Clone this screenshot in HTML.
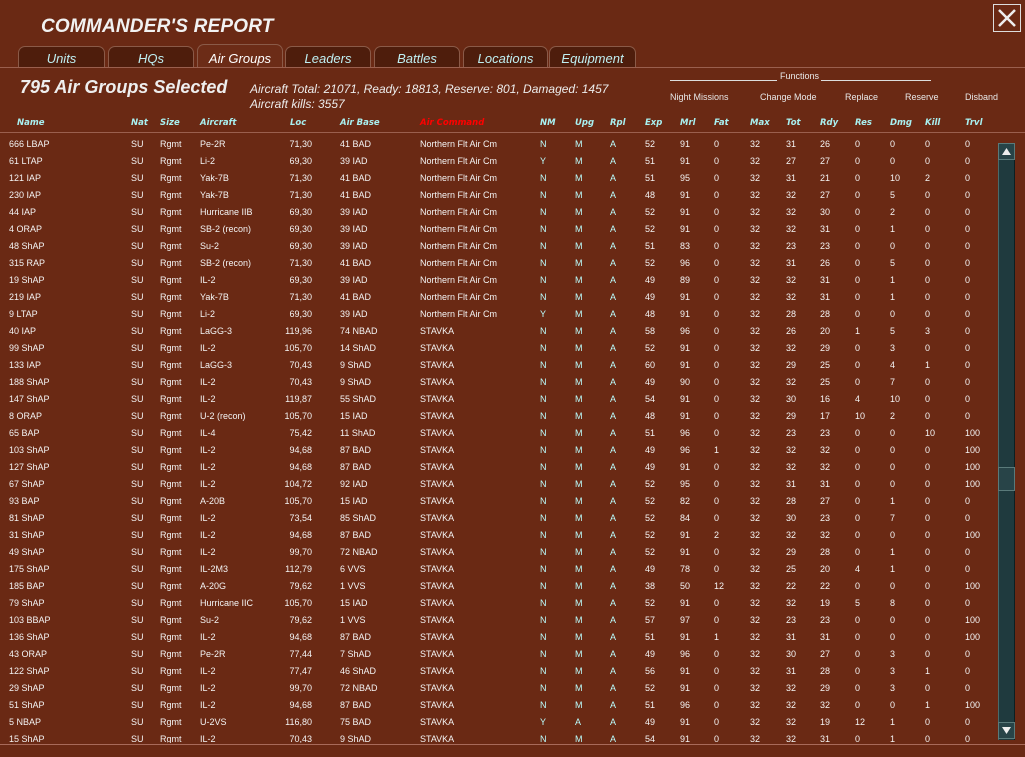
<!DOCTYPE html>
<html><head><meta charset="utf-8"><style>
*{margin:0;padding:0;box-sizing:border-box}
body{width:1025px;height:757px;background:#6a2914;position:relative;overflow:hidden;font-family:"Liberation Sans",sans-serif;color:#fff}
.abs{position:absolute;white-space:nowrap}
.title{left:41px;top:16px;font-size:19px;font-style:italic;color:#f2f2f2;font-weight:bold;letter-spacing:0.2px}
.close{left:993px;top:4px;width:28px;height:28px;border:1px solid #ddd}
.tab{position:absolute;top:46px;height:22px;background:#4e1d0c;border:1px solid #8a5a48;border-bottom:none;border-radius:7px 7px 0 0;color:#bfeff2;font-style:italic;font-size:13px;text-align:center;line-height:24px}
.tab.act{top:44px;height:24px;background:#6c2c17;color:#fff;line-height:28px}
.hline{position:absolute;left:0;width:1025px;height:1px;background:#9a5f4e}
.sel{left:20px;top:77px;font-size:18px;font-weight:bold;font-style:italic;color:#eee}
.stat{left:250px;font-size:12px;font-style:italic;color:#ececec}
.fn{font-size:9px;color:#e8e8e8;top:92px}
.hd span{position:absolute;top:118px;font-family:"DejaVu Sans",sans-serif;font-size:8.5px;font-weight:bold;font-style:italic;color:#a8f0f0}
#tbl{position:absolute;left:0;top:137px;width:995px;height:606px;overflow:hidden}
#in{position:absolute;left:0;top:-1px}
.r{position:relative;height:17px;width:995px;font-size:9px;line-height:17px;color:#f4f4f4}
.r span{position:absolute;top:0}
.r span:nth-child(1){left:9px}
.r span:nth-child(2){left:131px}
.r span:nth-child(3){left:160px}
.r span:nth-child(4){left:200px}
.r span:nth-child(5){left:270px;width:42px;text-align:right}
.r span:nth-child(6){left:340px}
.r span:nth-child(7){left:420px}
.r span:nth-child(8){left:540px;color:#bff}
.r span:nth-child(9){left:575px;color:#bff}
.r span:nth-child(10){left:610px;color:#bff}
.r span:nth-child(11){left:645px}
.r span:nth-child(12){left:680px}
.r span:nth-child(13){left:714px}
.r span:nth-child(14){left:750px}
.r span:nth-child(15){left:786px}
.r span:nth-child(16){left:820px}
.r span:nth-child(17){left:855px}
.r span:nth-child(18){left:890px}
.r span:nth-child(19){left:925px}
.r span:nth-child(20){left:965px}
.sb{position:absolute;left:998px;top:143px;width:17px;height:597px;background:#1f3a3e;border-left:1px solid #4a6a6a;border-right:1px solid #0d1f22}
.btn{position:absolute;left:998px;width:17px;height:17px;background:#284448;border:1px solid #5a7a7a}
</style></head><body>
<div class="abs title">COMMANDER'S REPORT</div>
<div class="abs close"><svg width="26" height="26" viewBox="0 0 26 26"><path d="M5 5L21 21M21 5L5 21" stroke="#eee" stroke-width="2.5"/></svg></div>
<div class="tab" style="left:18px;width:87px">Units</div>
<div class="tab" style="left:108px;width:86px">HQs</div>
<div class="tab act" style="left:197px;width:86px">Air Groups</div>
<div class="tab" style="left:285px;width:86px">Leaders</div>
<div class="tab" style="left:374px;width:86px">Battles</div>
<div class="tab" style="left:463px;width:85px">Locations</div>
<div class="tab" style="left:549px;width:87px">Equipment</div>
<div class="hline" style="top:67px"></div>
<div class="abs sel">795 Air Groups Selected</div>
<div class="abs stat" style="top:82px">Aircraft Total: 21071, Ready: 18813, Reserve: 801, Damaged: 1457</div>
<div class="abs stat" style="top:97px">Aircraft kills: 3557</div>
<div class="abs" style="left:670px;top:80px;width:107px;height:1px;background:#ddd"></div>
<div class="abs fn" style="left:780px;top:71px">Functions</div>
<div class="abs" style="left:821px;top:80px;width:110px;height:1px;background:#ddd"></div>
<div class="abs fn" style="left:670px">Night Missions</div>
<div class="abs fn" style="left:760px">Change Mode</div>
<div class="abs fn" style="left:845px">Replace</div>
<div class="abs fn" style="left:905px">Reserve</div>
<div class="abs fn" style="left:965px">Disband</div>
<div class="hd">
<span style="left:17px">Name</span><span style="left:131px">Nat</span><span style="left:160px">Size</span><span style="left:200px">Aircraft</span><span style="left:290px">Loc</span><span style="left:340px">Air Base</span><span style="left:420px;color:#f00">Air Command</span><span style="left:540px">NM</span><span style="left:575px">Upg</span><span style="left:610px">Rpl</span><span style="left:645px">Exp</span><span style="left:680px">Mrl</span><span style="left:714px">Fat</span><span style="left:750px">Max</span><span style="left:786px">Tot</span><span style="left:820px">Rdy</span><span style="left:855px">Res</span><span style="left:890px">Dmg</span><span style="left:925px">Kill</span><span style="left:965px">Trvl</span>
</div>
<div class="hline" style="top:132px"></div>
<div id="tbl"><div id="in">
<div class="r"><span>666 LBAP</span><span>SU</span><span>Rgmt</span><span>Pe-2R</span><span>71,30</span><span>41 BAD</span><span>Northern Flt Air Cm</span><span>N</span><span>M</span><span>A</span><span>52</span><span>91</span><span>0</span><span>32</span><span>31</span><span>26</span><span>0</span><span>0</span><span>0</span><span>0</span></div>
<div class="r"><span>61 LTAP</span><span>SU</span><span>Rgmt</span><span>Li-2</span><span>69,30</span><span>39 IAD</span><span>Northern Flt Air Cm</span><span>Y</span><span>M</span><span>A</span><span>51</span><span>91</span><span>0</span><span>32</span><span>27</span><span>27</span><span>0</span><span>0</span><span>0</span><span>0</span></div>
<div class="r"><span>121 IAP</span><span>SU</span><span>Rgmt</span><span>Yak-7B</span><span>71,30</span><span>41 BAD</span><span>Northern Flt Air Cm</span><span>N</span><span>M</span><span>A</span><span>51</span><span>95</span><span>0</span><span>32</span><span>31</span><span>21</span><span>0</span><span>10</span><span>2</span><span>0</span></div>
<div class="r"><span>230 IAP</span><span>SU</span><span>Rgmt</span><span>Yak-7B</span><span>71,30</span><span>41 BAD</span><span>Northern Flt Air Cm</span><span>N</span><span>M</span><span>A</span><span>48</span><span>91</span><span>0</span><span>32</span><span>32</span><span>27</span><span>0</span><span>5</span><span>0</span><span>0</span></div>
<div class="r"><span>44 IAP</span><span>SU</span><span>Rgmt</span><span>Hurricane IIB</span><span>69,30</span><span>39 IAD</span><span>Northern Flt Air Cm</span><span>N</span><span>M</span><span>A</span><span>52</span><span>91</span><span>0</span><span>32</span><span>32</span><span>30</span><span>0</span><span>2</span><span>0</span><span>0</span></div>
<div class="r"><span>4 ORAP</span><span>SU</span><span>Rgmt</span><span>SB-2 (recon)</span><span>69,30</span><span>39 IAD</span><span>Northern Flt Air Cm</span><span>N</span><span>M</span><span>A</span><span>52</span><span>91</span><span>0</span><span>32</span><span>32</span><span>31</span><span>0</span><span>1</span><span>0</span><span>0</span></div>
<div class="r"><span>48 ShAP</span><span>SU</span><span>Rgmt</span><span>Su-2</span><span>69,30</span><span>39 IAD</span><span>Northern Flt Air Cm</span><span>N</span><span>M</span><span>A</span><span>51</span><span>83</span><span>0</span><span>32</span><span>23</span><span>23</span><span>0</span><span>0</span><span>0</span><span>0</span></div>
<div class="r"><span>315 RAP</span><span>SU</span><span>Rgmt</span><span>SB-2 (recon)</span><span>71,30</span><span>41 BAD</span><span>Northern Flt Air Cm</span><span>N</span><span>M</span><span>A</span><span>52</span><span>96</span><span>0</span><span>32</span><span>31</span><span>26</span><span>0</span><span>5</span><span>0</span><span>0</span></div>
<div class="r"><span>19 ShAP</span><span>SU</span><span>Rgmt</span><span>IL-2</span><span>69,30</span><span>39 IAD</span><span>Northern Flt Air Cm</span><span>N</span><span>M</span><span>A</span><span>49</span><span>89</span><span>0</span><span>32</span><span>32</span><span>31</span><span>0</span><span>1</span><span>0</span><span>0</span></div>
<div class="r"><span>219 IAP</span><span>SU</span><span>Rgmt</span><span>Yak-7B</span><span>71,30</span><span>41 BAD</span><span>Northern Flt Air Cm</span><span>N</span><span>M</span><span>A</span><span>49</span><span>91</span><span>0</span><span>32</span><span>32</span><span>31</span><span>0</span><span>1</span><span>0</span><span>0</span></div>
<div class="r"><span>9 LTAP</span><span>SU</span><span>Rgmt</span><span>Li-2</span><span>69,30</span><span>39 IAD</span><span>Northern Flt Air Cm</span><span>Y</span><span>M</span><span>A</span><span>48</span><span>91</span><span>0</span><span>32</span><span>28</span><span>28</span><span>0</span><span>0</span><span>0</span><span>0</span></div>
<div class="r"><span>40 IAP</span><span>SU</span><span>Rgmt</span><span>LaGG-3</span><span>119,96</span><span>74 NBAD</span><span>STAVKA</span><span>N</span><span>M</span><span>A</span><span>58</span><span>96</span><span>0</span><span>32</span><span>26</span><span>20</span><span>1</span><span>5</span><span>3</span><span>0</span></div>
<div class="r"><span>99 ShAP</span><span>SU</span><span>Rgmt</span><span>IL-2</span><span>105,70</span><span>14 ShAD</span><span>STAVKA</span><span>N</span><span>M</span><span>A</span><span>52</span><span>91</span><span>0</span><span>32</span><span>32</span><span>29</span><span>0</span><span>3</span><span>0</span><span>0</span></div>
<div class="r"><span>133 IAP</span><span>SU</span><span>Rgmt</span><span>LaGG-3</span><span>70,43</span><span>9 ShAD</span><span>STAVKA</span><span>N</span><span>M</span><span>A</span><span>60</span><span>91</span><span>0</span><span>32</span><span>29</span><span>25</span><span>0</span><span>4</span><span>1</span><span>0</span></div>
<div class="r"><span>188 ShAP</span><span>SU</span><span>Rgmt</span><span>IL-2</span><span>70,43</span><span>9 ShAD</span><span>STAVKA</span><span>N</span><span>M</span><span>A</span><span>49</span><span>90</span><span>0</span><span>32</span><span>32</span><span>25</span><span>0</span><span>7</span><span>0</span><span>0</span></div>
<div class="r"><span>147 ShAP</span><span>SU</span><span>Rgmt</span><span>IL-2</span><span>119,87</span><span>55 ShAD</span><span>STAVKA</span><span>N</span><span>M</span><span>A</span><span>54</span><span>91</span><span>0</span><span>32</span><span>30</span><span>16</span><span>4</span><span>10</span><span>0</span><span>0</span></div>
<div class="r"><span>8 ORAP</span><span>SU</span><span>Rgmt</span><span>U-2 (recon)</span><span>105,70</span><span>15 IAD</span><span>STAVKA</span><span>N</span><span>M</span><span>A</span><span>48</span><span>91</span><span>0</span><span>32</span><span>29</span><span>17</span><span>10</span><span>2</span><span>0</span><span>0</span></div>
<div class="r"><span>65 BAP</span><span>SU</span><span>Rgmt</span><span>IL-4</span><span>75,42</span><span>11 ShAD</span><span>STAVKA</span><span>N</span><span>M</span><span>A</span><span>51</span><span>96</span><span>0</span><span>32</span><span>23</span><span>23</span><span>0</span><span>0</span><span>10</span><span>100</span></div>
<div class="r"><span>103 ShAP</span><span>SU</span><span>Rgmt</span><span>IL-2</span><span>94,68</span><span>87 BAD</span><span>STAVKA</span><span>N</span><span>M</span><span>A</span><span>49</span><span>96</span><span>1</span><span>32</span><span>32</span><span>32</span><span>0</span><span>0</span><span>0</span><span>100</span></div>
<div class="r"><span>127 ShAP</span><span>SU</span><span>Rgmt</span><span>IL-2</span><span>94,68</span><span>87 BAD</span><span>STAVKA</span><span>N</span><span>M</span><span>A</span><span>49</span><span>91</span><span>0</span><span>32</span><span>32</span><span>32</span><span>0</span><span>0</span><span>0</span><span>100</span></div>
<div class="r"><span>67 ShAP</span><span>SU</span><span>Rgmt</span><span>IL-2</span><span>104,72</span><span>92 IAD</span><span>STAVKA</span><span>N</span><span>M</span><span>A</span><span>52</span><span>95</span><span>0</span><span>32</span><span>31</span><span>31</span><span>0</span><span>0</span><span>0</span><span>100</span></div>
<div class="r"><span>93 BAP</span><span>SU</span><span>Rgmt</span><span>A-20B</span><span>105,70</span><span>15 IAD</span><span>STAVKA</span><span>N</span><span>M</span><span>A</span><span>52</span><span>82</span><span>0</span><span>32</span><span>28</span><span>27</span><span>0</span><span>1</span><span>0</span><span>0</span></div>
<div class="r"><span>81 ShAP</span><span>SU</span><span>Rgmt</span><span>IL-2</span><span>73,54</span><span>85 ShAD</span><span>STAVKA</span><span>N</span><span>M</span><span>A</span><span>52</span><span>84</span><span>0</span><span>32</span><span>30</span><span>23</span><span>0</span><span>7</span><span>0</span><span>0</span></div>
<div class="r"><span>31 ShAP</span><span>SU</span><span>Rgmt</span><span>IL-2</span><span>94,68</span><span>87 BAD</span><span>STAVKA</span><span>N</span><span>M</span><span>A</span><span>52</span><span>91</span><span>2</span><span>32</span><span>32</span><span>32</span><span>0</span><span>0</span><span>0</span><span>100</span></div>
<div class="r"><span>49 ShAP</span><span>SU</span><span>Rgmt</span><span>IL-2</span><span>99,70</span><span>72 NBAD</span><span>STAVKA</span><span>N</span><span>M</span><span>A</span><span>52</span><span>91</span><span>0</span><span>32</span><span>29</span><span>28</span><span>0</span><span>1</span><span>0</span><span>0</span></div>
<div class="r"><span>175 ShAP</span><span>SU</span><span>Rgmt</span><span>IL-2M3</span><span>112,79</span><span>6 VVS</span><span>STAVKA</span><span>N</span><span>M</span><span>A</span><span>49</span><span>78</span><span>0</span><span>32</span><span>25</span><span>20</span><span>4</span><span>1</span><span>0</span><span>0</span></div>
<div class="r"><span>185 BAP</span><span>SU</span><span>Rgmt</span><span>A-20G</span><span>79,62</span><span>1 VVS</span><span>STAVKA</span><span>N</span><span>M</span><span>A</span><span>38</span><span>50</span><span>12</span><span>32</span><span>22</span><span>22</span><span>0</span><span>0</span><span>0</span><span>100</span></div>
<div class="r"><span>79 ShAP</span><span>SU</span><span>Rgmt</span><span>Hurricane IIC</span><span>105,70</span><span>15 IAD</span><span>STAVKA</span><span>N</span><span>M</span><span>A</span><span>52</span><span>91</span><span>0</span><span>32</span><span>32</span><span>19</span><span>5</span><span>8</span><span>0</span><span>0</span></div>
<div class="r"><span>103 BBAP</span><span>SU</span><span>Rgmt</span><span>Su-2</span><span>79,62</span><span>1 VVS</span><span>STAVKA</span><span>N</span><span>M</span><span>A</span><span>57</span><span>97</span><span>0</span><span>32</span><span>23</span><span>23</span><span>0</span><span>0</span><span>0</span><span>100</span></div>
<div class="r"><span>136 ShAP</span><span>SU</span><span>Rgmt</span><span>IL-2</span><span>94,68</span><span>87 BAD</span><span>STAVKA</span><span>N</span><span>M</span><span>A</span><span>51</span><span>91</span><span>1</span><span>32</span><span>31</span><span>31</span><span>0</span><span>0</span><span>0</span><span>100</span></div>
<div class="r"><span>43 ORAP</span><span>SU</span><span>Rgmt</span><span>Pe-2R</span><span>77,44</span><span>7 ShAD</span><span>STAVKA</span><span>N</span><span>M</span><span>A</span><span>49</span><span>96</span><span>0</span><span>32</span><span>30</span><span>27</span><span>0</span><span>3</span><span>0</span><span>0</span></div>
<div class="r"><span>122 ShAP</span><span>SU</span><span>Rgmt</span><span>IL-2</span><span>77,47</span><span>46 ShAD</span><span>STAVKA</span><span>N</span><span>M</span><span>A</span><span>56</span><span>91</span><span>0</span><span>32</span><span>31</span><span>28</span><span>0</span><span>3</span><span>1</span><span>0</span></div>
<div class="r"><span>29 ShAP</span><span>SU</span><span>Rgmt</span><span>IL-2</span><span>99,70</span><span>72 NBAD</span><span>STAVKA</span><span>N</span><span>M</span><span>A</span><span>52</span><span>91</span><span>0</span><span>32</span><span>32</span><span>29</span><span>0</span><span>3</span><span>0</span><span>0</span></div>
<div class="r"><span>51 ShAP</span><span>SU</span><span>Rgmt</span><span>IL-2</span><span>94,68</span><span>87 BAD</span><span>STAVKA</span><span>N</span><span>M</span><span>A</span><span>51</span><span>96</span><span>0</span><span>32</span><span>32</span><span>32</span><span>0</span><span>0</span><span>1</span><span>100</span></div>
<div class="r"><span>5 NBAP</span><span>SU</span><span>Rgmt</span><span>U-2VS</span><span>116,80</span><span>75 BAD</span><span>STAVKA</span><span>Y</span><span>A</span><span>A</span><span>49</span><span>91</span><span>0</span><span>32</span><span>32</span><span>19</span><span>12</span><span>1</span><span>0</span><span>0</span></div>
<div class="r"><span>15 ShAP</span><span>SU</span><span>Rgmt</span><span>IL-2</span><span>70,43</span><span>9 ShAD</span><span>STAVKA</span><span>N</span><span>M</span><span>A</span><span>54</span><span>91</span><span>0</span><span>32</span><span>32</span><span>31</span><span>0</span><span>1</span><span>0</span><span>0</span></div>
</div></div>
<div class="sb"></div>
<div class="btn" style="top:143px"><svg width="15" height="15"><path d="M3 11L7.5 4L12 11Z" fill="#eee"/></svg></div>
<div class="btn" style="top:467px;height:24px"></div>
<div class="btn" style="top:722px"><svg width="15" height="15"><path d="M3 4L7.5 11L12 4Z" fill="#eee"/></svg></div>
<div class="hline" style="top:744px;background:#a86a5a"></div>
</body></html>
